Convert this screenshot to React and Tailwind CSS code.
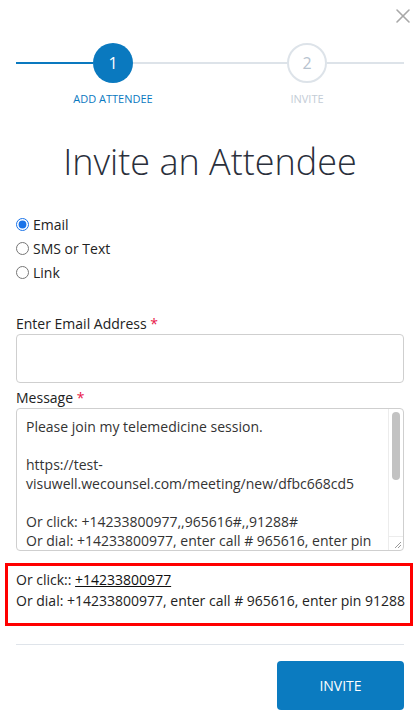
import React from 'react'
import { X } from 'lucide-react'

const message = `Please join my telemedicine session.

https://test-visuwell.wecounsel.com/meeting/new/dfbc668cd5

Or click: +14233800977,,965616#,,91288#
Or dial: +14233800977, enter call # 965616, enter pin 91288`

function Step({ number, label, active, first }) {
  return (
    <div className="flex flex-col items-center">
      <div className="flex items-center w-full">
        <div className={`flex-1 h-[2px] ${active && first ? 'bg-[#0a79bf]' : 'bg-[#dde3e9]'}`} />
        <div
          className={
            active
              ? 'w-10 h-10 rounded-full bg-[#0a79bf] text-white flex items-center justify-center text-[16px]'
              : 'w-10 h-10 rounded-full border-2 border-[#dde3e9] text-[#b7c3cf] flex items-center justify-center text-[16px]'
          }
        >
          {number}
        </div>
        <div className="flex-1 h-[2px] bg-[#dde3e9]" />
      </div>
      <div className={`mt-[8px] text-[11px] leading-[15px] ${active ? 'text-[#0a79bf]' : 'text-[#c3ccd6]'}`}>
        {label}
      </div>
    </div>
  )
}

function Radio({ label, checked }) {
  return (
    <label className="flex items-center h-[24px] gap-[4px] text-[14px] text-[#222]">
      <input type="radio" name="method" defaultChecked={checked} className="m-0 w-[13px] h-[13px] accent-[#1a73e8]" />
      <span>{label}</span>
    </label>
  )
}

export default function App() {
  return (
    <div className="relative w-[419px] h-[721px] bg-white overflow-hidden font-['Open_Sans',sans-serif] text-[#222]">
      <button className="absolute left-[391px] top-[4px] text-[#a8a8a8]" aria-label="Close">
        <X size={24} strokeWidth={1.6} />
      </button>

      <div className="px-[16px] pr-[15px] pt-[43px]">
        <div className="grid grid-cols-2">
          <Step number="1" label="ADD ATTENDEE" active first />
          <Step number="2" label="INVITE" />
        </div>

        <h1 className="mt-[33px] text-center text-[36px] leading-[46px] font-light text-[#2a2f3b]">
          Invite an Attendee
        </h1>

        <div className="mt-[27px] flex flex-col">
          <Radio label="Email" checked />
          <Radio label="SMS or Text" />
          <Radio label="Link" />
        </div>

        <div className="mt-[30px] text-[14px] leading-[19px]">
          Enter Email Address <span className="text-[#e8174a]">*</span>
        </div>
        <div className="mt-[1px] h-[49px] border border-[#cfcfcf] rounded-[4px]" />

        <div className="mt-[5px] text-[14px] leading-[19px]">
          Message <span className="text-[#e8174a]">*</span>
        </div>
        <div className="mt-[1px] h-[143px] border border-[#cfcfcf] rounded-[4px] flex overflow-hidden">
          <div className="flex-1 pl-[9px] pr-[4px] pt-[8px] text-[14px] leading-[19px] text-[#333] whitespace-pre-wrap overflow-hidden">
            {message}
          </div>
          <div className="w-[15px] border-l border-[#ececec] flex flex-col">
            <div className="flex-1 pt-[3px] flex justify-center">
              <div className="w-[8px] h-[68px] rounded-full bg-[#c2c2c2]" />
            </div>
            <div className="h-[14px] border-t border-[#ececec] flex items-end justify-end">
              <svg width="10" height="10" viewBox="0 0 10 10" className="mb-[1px] mr-[1px]">
                <path d="M9 3 L3 9 M9 6 L6 9" stroke="#9a9a9a" strokeWidth="1" />
              </svg>
            </div>
          </div>
        </div>

        <div className="mt-[12px] ml-[-11px] mr-[-9px] border-[3px] border-[#ff0000] pl-[8px] pt-[3px] pb-[12px] text-[14px] leading-[21px]">
          <div>
            Or click:: <a href="#" className="underline text-[#111]">+14233800977</a>
          </div>
          <div>Or dial: +14233800977, enter call # 965616, enter pin 91288</div>
        </div>

        <div className="mt-[18px] border-t border-[#dfe4ea]" />

        <div className="mt-[16px] flex justify-end">
          <button className="w-[127px] h-[49px] rounded-[4px] bg-[#0b7bc0] text-white text-[14px]">INVITE</button>
        </div>
      </div>
    </div>
  )
}
